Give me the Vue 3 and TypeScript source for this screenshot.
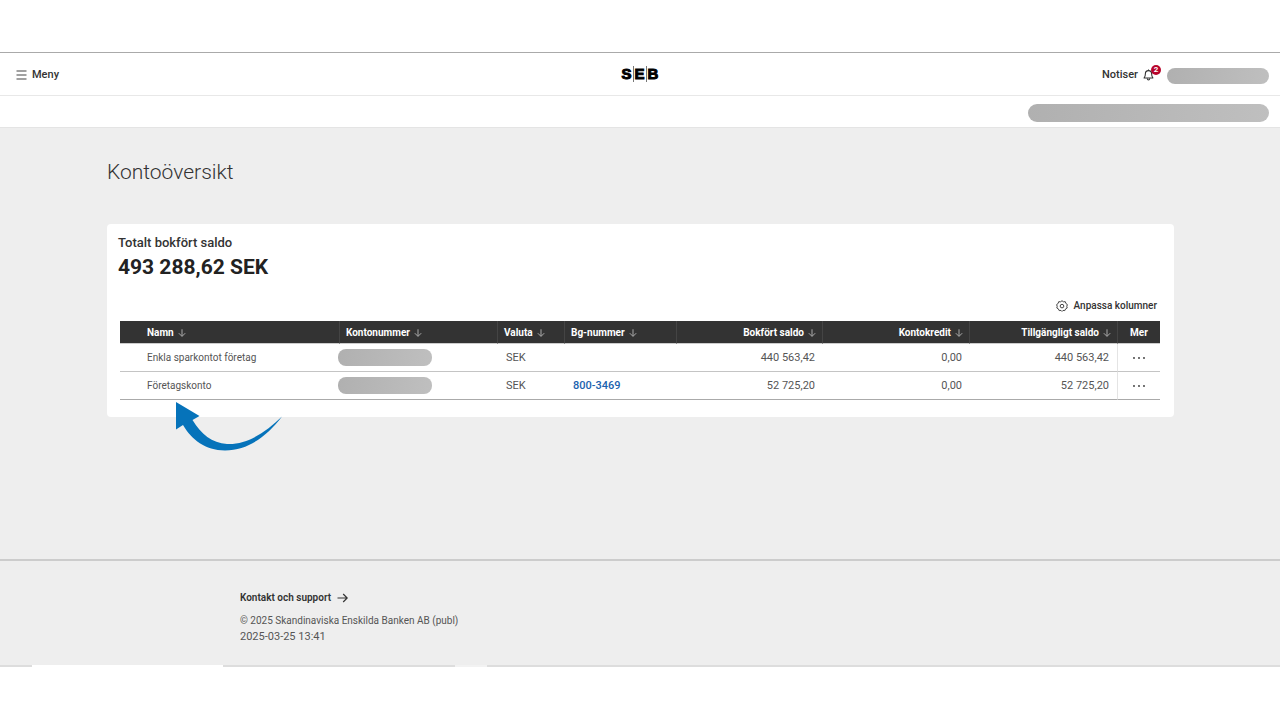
<script setup lang="ts">
interface Column {
  key: string
  label: string
  sortable: boolean
}

interface Account {
  name: string
  currency: string
  bg: string
  booked: string
  credit: string
  available: string
}

const columns: Column[] = [
  { key: 'name', label: 'Namn', sortable: true },
  { key: 'number', label: 'Kontonummer', sortable: true },
  { key: 'currency', label: 'Valuta', sortable: true },
  { key: 'bg', label: 'Bg-nummer', sortable: true },
  { key: 'booked', label: 'Bokfört saldo', sortable: true },
  { key: 'credit', label: 'Kontokredit', sortable: true },
  { key: 'available', label: 'Tillgängligt saldo', sortable: true },
  { key: 'more', label: 'Mer', sortable: false },
]

const accounts: Account[] = [
  { name: 'Enkla sparkontot företag', currency: 'SEK', bg: '', booked: '440 563,42', credit: '0,00', available: '440 563,42' },
  { name: 'Företagskonto', currency: 'SEK', bg: '800-3469', booked: '52 725,20', credit: '0,00', available: '52 725,20' },
]
</script>

<template>
  <div class="page">
    <header class="topbar">
      <button type="button" class="plain menu">
        <svg width="11" height="10" viewBox="0 0 11 10" aria-hidden="true">
          <path d="M0.5 1H10.5M0.5 5H10.5M0.5 9H10.5" stroke="#444" stroke-width="1.1" />
        </svg>
        <span>Meny</span>
      </button>
      <a href="#" class="logo"><span>S</span><i></i><span>E</span><i></i><span>B</span></a>
      <div class="user">
        <button type="button" class="plain notices">
          <span>Notiser</span>
          <span class="bell">
            <svg width="11" height="12" viewBox="0 0 12 13" fill="none" stroke="#333" aria-hidden="true">
              <path d="M1.2 9.7C2.3 8.7 2.6 7.7 2.6 5.2C2.6 3 4 1.7 6 1.7C8 1.7 9.4 3 9.4 5.2C9.4 7.7 9.7 8.7 10.8 9.7Z" stroke-width="1.2" stroke-linejoin="round" />
              <path d="M4.6 10.2C4.7 11.3 5.2 11.9 6 11.9C6.8 11.9 7.3 11.3 7.4 10.2M6 0.6V1.7" stroke-width="1.1" />
            </svg>
            <span class="badge">2</span>
          </span>
        </button>
        <span class="pill pill-user"></span>
      </div>
    </header>
    <div class="subbar"><span class="pill pill-company"></span></div>

    <main class="main">
      <h1>Kontoöversikt</h1>
      <section class="card">
        <h2>Totalt bokfört saldo</h2>
        <p class="total">493 288,62 SEK</p>
        <div class="tools">
          <button type="button" class="plain adjust">
            <svg width="12" height="12" viewBox="0 0 12 12" fill="none" stroke="#444" aria-hidden="true">
              <path d="M6 0.7L7.4 1.8L9.3 1.7L9.9 3.5L11.4 4.6L10.8 6.3L11.2 8L9.6 8.9L8.8 10.6L7 10.4L6 11.4L5 10.4L3.2 10.6L2.4 8.9L0.8 8L1.2 6.3L0.6 4.6L2.1 3.5L2.7 1.7L4.6 1.8Z" stroke-linejoin="round" />
              <circle cx="6" cy="6.1" r="1.8" />
            </svg>
            <span>Anpassa kolumner</span>
          </button>
        </div>
        <table>
          <colgroup>
            <col v-for="c in columns" :key="c.key" :class="'col-' + c.key" />
          </colgroup>
          <thead>
            <tr>
              <th v-for="c in columns" :key="c.key" :class="c.key" scope="col">
                <button v-if="c.sortable" type="button" class="plain sort">
                  <span>{{ c.label }}</span>
                  <svg width="8" height="8" viewBox="0 0 8 8" fill="none" stroke="#aaa" aria-hidden="true">
                    <path d="M4 0.3V7.2M0.8 4.2L4 7.4L7.2 4.2" />
                  </svg>
                </button>
                <span v-else>{{ c.label }}</span>
              </th>
            </tr>
          </thead>
          <tbody>
            <tr v-for="a in accounts" :key="a.name">
              <td class="name">{{ a.name }}</td>
              <td class="number"><span class="pill pill-number"></span></td>
              <td class="currency">{{ a.currency }}</td>
              <td class="bg"><a v-if="a.bg" href="#">{{ a.bg }}</a></td>
              <td class="booked">{{ a.booked }}</td>
              <td class="credit">{{ a.credit }}</td>
              <td class="available">{{ a.available }}</td>
              <td class="more">
                <button type="button" class="plain dots" :aria-label="'Mer: ' + a.name">
                  <svg width="12" height="2" viewBox="0 0 12 2" fill="#333" aria-hidden="true">
                    <circle cx="1" cy="1" r="0.9" /><circle cx="6" cy="1" r="0.9" /><circle cx="11" cy="1" r="0.9" />
                  </svg>
                </button>
              </td>
            </tr>
          </tbody>
        </table>
        <svg class="pointer" width="108" height="50" viewBox="0 0 108 50" aria-hidden="true">
          <path d="M1 0L24.5 14L17.5 18C26 32 37 41 52 42C72 43 91 30 107 14.500C92 34 74 48 50 48.500C30 48 17 38 8 23L1 27.500Z" fill="#0673ba" />
        </svg>
      </section>
    </main>

    <footer class="footer">
      <a href="#" class="support">
        <span>Kontakt och support</span>
        <svg width="11" height="10" viewBox="0 0 11 10" fill="none" stroke="#333" aria-hidden="true">
          <path d="M0.5 5H10M6.2 1L10.2 5L6.2 9" stroke-width="1.2" />
        </svg>
      </a>
      <p>© 2025 Skandinaviska Enskilda Banken AB (publ)</p>
      <p class="time">2025-03-25 13:41</p>
    </footer>
    <div class="edge"><i class="e1"></i><i class="e2"></i><i class="e3"></i><i class="e4"></i><i class="e5"></i></div>
  </div>
</template>

<style>
body {
  margin: 0;
  background: #fff;
}
</style>

<style scoped>
.page {
  padding: 52px 0;
  font-family: Roboto, "Liberation Sans", sans-serif;
  font-size: 10px;
  line-height: 16px;
  color: #555;
}
.plain {
  display: inline-flex;
  align-items: center;
  padding: 0;
  border: 0;
  background: none;
  color: #333;
  font: inherit;
  font-weight: 500;
  cursor: pointer;
}
a {
  text-decoration: none;
}
.topbar {
  display: grid;
  grid-template-columns: 1fr auto 1fr;
  align-items: center;
  height: 42px;
  padding: 0 11px;
  border-top: 1px solid #aaa;
  border-bottom: 1px solid #e8e8e8;
  font-size: 11px;
}
.menu,
.notices {
  padding-top: 1px;
}
.menu {
  gap: 5px;
  justify-self: start;
  margin-left: 5px;
}
.logo {
  display: flex;
  align-items: center;
  gap: 1px;
  color: #000;
  font-family: "Liberation Sans", sans-serif;
  font-size: 15px;
  font-weight: 700;
  -webkit-text-stroke: 1px #000;
}
.logo i {
  width: 1px;
  height: 16px;
  background: #777;
}
.user {
  display: flex;
  align-items: center;
  justify-content: flex-end;
  gap: 13px;
}
.notices {
  gap: 5px;
}
.bell {
  position: relative;
  display: flex;
}
.badge {
  position: absolute;
  left: 8px;
  top: -4px;
  width: 10px;
  height: 10px;
  border-radius: 50%;
  background: #b8052b;
  color: #fff;
  font-size: 8px;
  font-weight: 700;
  line-height: 10px;
  text-align: center;
}
.pill {
  display: block;
  border-radius: 8px;
  background: linear-gradient(100deg, #b0b0b0, #bfbfbf);
}
.pill-user {
  width: 102px;
  height: 16px;
  margin-top: 3px;
}
.pill-company {
  width: 241px;
  height: 18px;
  border-radius: 9px;
}
.pill-number {
  width: 94px;
  height: 17px;
  margin-left: -2px;
}
.subbar {
  display: flex;
  align-items: center;
  justify-content: flex-end;
  height: 31px;
  padding: 3px 11px 0 0;
  box-sizing: border-box;
}
.main {
  min-height: 432px;
  padding: 30px 106px 0 107px;
  box-sizing: border-box;
  border-top: 1px solid #e4e4e4;
  background: #eee;
}
h1 {
  margin: 0 0 38px;
  color: #333;
  font-size: 21px;
  font-weight: 300;
  line-height: 28px;
}
.card {
  position: relative;
  padding: 11px 14px 17px 13px;
  border-radius: 4px;
  background: #fff;
}
h2 {
  margin: 0 -2px;
  color: #333;
  font-size: 13px;
  font-weight: 500;
}
.total {
  margin: 4px -2px 0;
  color: #222;
  font-size: 21px;
  font-weight: 700;
  line-height: 24px;
}
.tools {
  display: flex;
  justify-content: flex-end;
  padding: 19px 3px 7px 0;
}
.adjust {
  gap: 6px;
}
table {
  width: 100%;
  table-layout: fixed;
  border-collapse: separate;
  border-spacing: 0;
}
.col-number { width: 158px; }
.col-currency { width: 67px; }
.col-bg { width: 112px; }
.col-booked { width: 146px; }
.col-credit { width: 147px; }
.col-available { width: 148px; }
.col-more { width: 42px; }
th {
  height: 20px;
  padding: 2px 6px 0;
  border-right: 1px solid #444;
  border-bottom: 1px solid #ccc;
  background: #333;
  color: #fff;
  font-weight: 700;
  text-align: left;
  white-space: nowrap;
}
th:last-child {
  border-right: 0;
}
.sort {
  gap: 4px;
  color: #fff;
  font-weight: 700;
}
td {
  height: 26px;
  padding: 1px 8px 0;
  border-bottom: 1px solid #c4c4c4;
}
tbody tr:last-child td {
  border-bottom-color: #aaa;
}
th.name,
td.name {
  padding-left: 27px;
}
.booked,
.credit,
.available {
  text-align: right;
}
td.currency,
td.bg,
td.booked,
td.credit,
td.available {
  font-size: 11px;
}
td.number {
  padding: 0;
}
td.available {
  border-right: 1px solid #e4e4e4;
}
th.more,
td.more {
  padding-left: 0;
  padding-right: 0;
  text-align: center;
}
.dots {
  justify-content: center;
  width: 24px;
  height: 16px;
  vertical-align: middle;
}
.bg a {
  color: #1b62ae;
  font-weight: 500;
}
.pointer {
  position: absolute;
  left: 68px;
  top: 178px;
}
.footer {
  height: 106px;
  padding: 29px 16px 0 240px;
  box-sizing: border-box;
  border-top: 2px solid #ccc;
  background: #eee;
}
.support {
  display: inline-flex;
  align-items: center;
  gap: 6px;
  margin-bottom: 7px;
  color: #333;
  font-weight: 600;
}
.footer p {
  margin: 0;
}
.footer .time {
  font-size: 11px;
}
.edge {
  display: flex;
  height: 2px;
}
.edge i {
  background: #ddd;
}
.edge .e1 { width: 32px; }
.edge .e2 { width: 191px; background: #fff; }
.edge .e3 { width: 232px; }
.edge .e4 { width: 32px; background: #f2f2f2; }
.edge .e5 { flex: 1; }
</style>
